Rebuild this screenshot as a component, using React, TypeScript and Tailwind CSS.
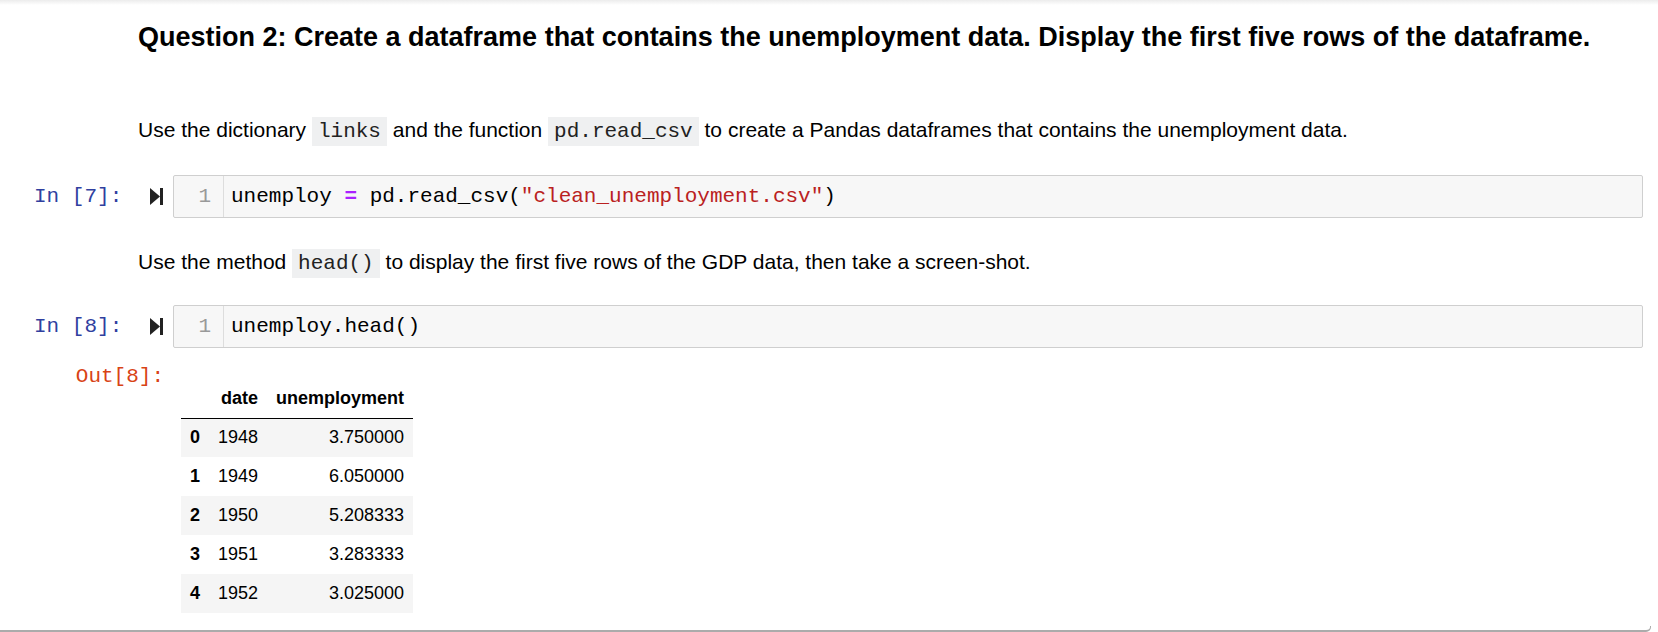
const sans = "font-['Liberation_Sans',Arial,sans-serif]";
const mono = "font-['Liberation_Mono','Courier_New',monospace]";

const rows = [
  { idx: 0, date: 1948, value: "3.750000" },
  { idx: 1, date: 1949, value: "6.050000" },
  { idx: 2, date: 1950, value: "5.208333" },
  { idx: 3, date: 1951, value: "3.283333" },
  { idx: 4, date: 1952, value: "3.025000" },
];

function InlineCode({ children }: { children: React.ReactNode }) {
  return (
    <code className={`${mono} bg-[#eff0f1] px-[6px] py-[3px] text-[21px] text-[#222]`}>
      {children}
    </code>
  );
}

function RunIcon() {
  return (
    <svg width="13" height="17" viewBox="0 0 13 17" className="shrink-0">
      <polygon points="0,0 10,8.5 0,17" fill="#222" />
      <rect x="10" y="0" width="3" height="17" fill="#222" />
    </svg>
  );
}

function CodeCell({ n, children }: { n: number; children: React.ReactNode }) {
  return (
    <div className="flex">
      {/* prompt */}
      <div className={`${mono} w-[173px] shrink-0 flex items-center pl-[34px] pr-[10px] text-[21px] text-[#303f9f]`}>
        <span>In [{n}]:</span>
        <span className="ml-auto">
          <RunIcon />
        </span>
      </div>
      <div className="flex-1 mr-[15px] h-[43px] flex border border-[#cfcfcf] rounded-[2px] bg-[#f7f7f7]">
        <div className={`${mono} w-[50px] shrink-0 border-r border-[#ddd] flex items-center justify-end pr-[12px] text-[21px] text-[#999]`}>
          1
        </div>
        <div className={`${mono} flex items-center pl-[7px] text-[21px] text-black whitespace-pre`}>
          {children}
        </div>
      </div>
    </div>
  );
}

export default function App() {
  return (
    <div className={`${sans} w-[1658px] h-[632px] bg-white overflow-hidden text-black`}>
      {/* top edge shadow */}
      <div className="h-[5px] bg-linear-to-b from-[#ececec] to-white" />

      {/* Question heading */}
      <h3 className="mt-[16px] pl-[138px] text-[27px] leading-[32px] font-bold">
        Question 2: Create a dataframe that contains the unemployment data. Display the first five rows of the dataframe.
      </h3>

      <p className="mt-[62px] pl-[138px] text-[21px] leading-[30px]">
        Use the dictionary <InlineCode>links</InlineCode> and the function{" "}
        <InlineCode>pd.read_csv</InlineCode> to create a Pandas dataframes that contains the unemployment data.
      </p>

      <div className="mt-[28px]">
        <CodeCell n={7}>
          unemploy <span className="text-[#aa22ff] font-bold">=</span> pd.read_csv(
          <span className="text-[#ba2121]">"clean_unemployment.csv"</span>)
        </CodeCell>
      </div>

      <p className="mt-[29px] pl-[138px] text-[21px] leading-[30px]">
        Use the method <InlineCode>head()</InlineCode> to display the first five rows of the GDP data, then take a screen-shot.
      </p>

      <div className="mt-[26px]">
        <CodeCell n={8}>unemploy.head()</CodeCell>
      </div>

      {/* output */}
      <div className="flex">
        <div className={`${mono} w-[173px] shrink-0 pt-[16px] pr-[9px] text-right text-[21px] leading-[25px] text-[#d84315]`}>
          Out[8]:
        </div>
        <div className="pt-[32px] pl-[8px]">
          <table className="border-collapse text-[18px] leading-[21px]">
            <thead>
              <tr className="h-[38px] border-b border-black">
                <th className="px-[9px]" />
                <th className="px-[9px] text-right font-bold">date</th>
                <th className="px-[9px] text-right font-bold">unemployment</th>
              </tr>
            </thead>
            <tbody>
              {rows.map((r) => (
                <tr key={r.idx} className={`h-[39px] ${r.idx % 2 === 0 ? "bg-[#f5f5f5]" : "bg-white"}`}>
                  <th className="px-[9px] text-right font-bold">{r.idx}</th>
                  <td className="px-[9px] text-right">{r.date}</td>
                  <td className="px-[9px] text-right">{r.value}</td>
                </tr>
              ))}
            </tbody>
          </table>
        </div>
      </div>

      {/* bottom cell border */}
      <div className="mt-[13px] mr-[7px] h-[6px] border-b-2 border-r border-[#ababab] rounded-br-[5px]" />
    </div>
  );
}
